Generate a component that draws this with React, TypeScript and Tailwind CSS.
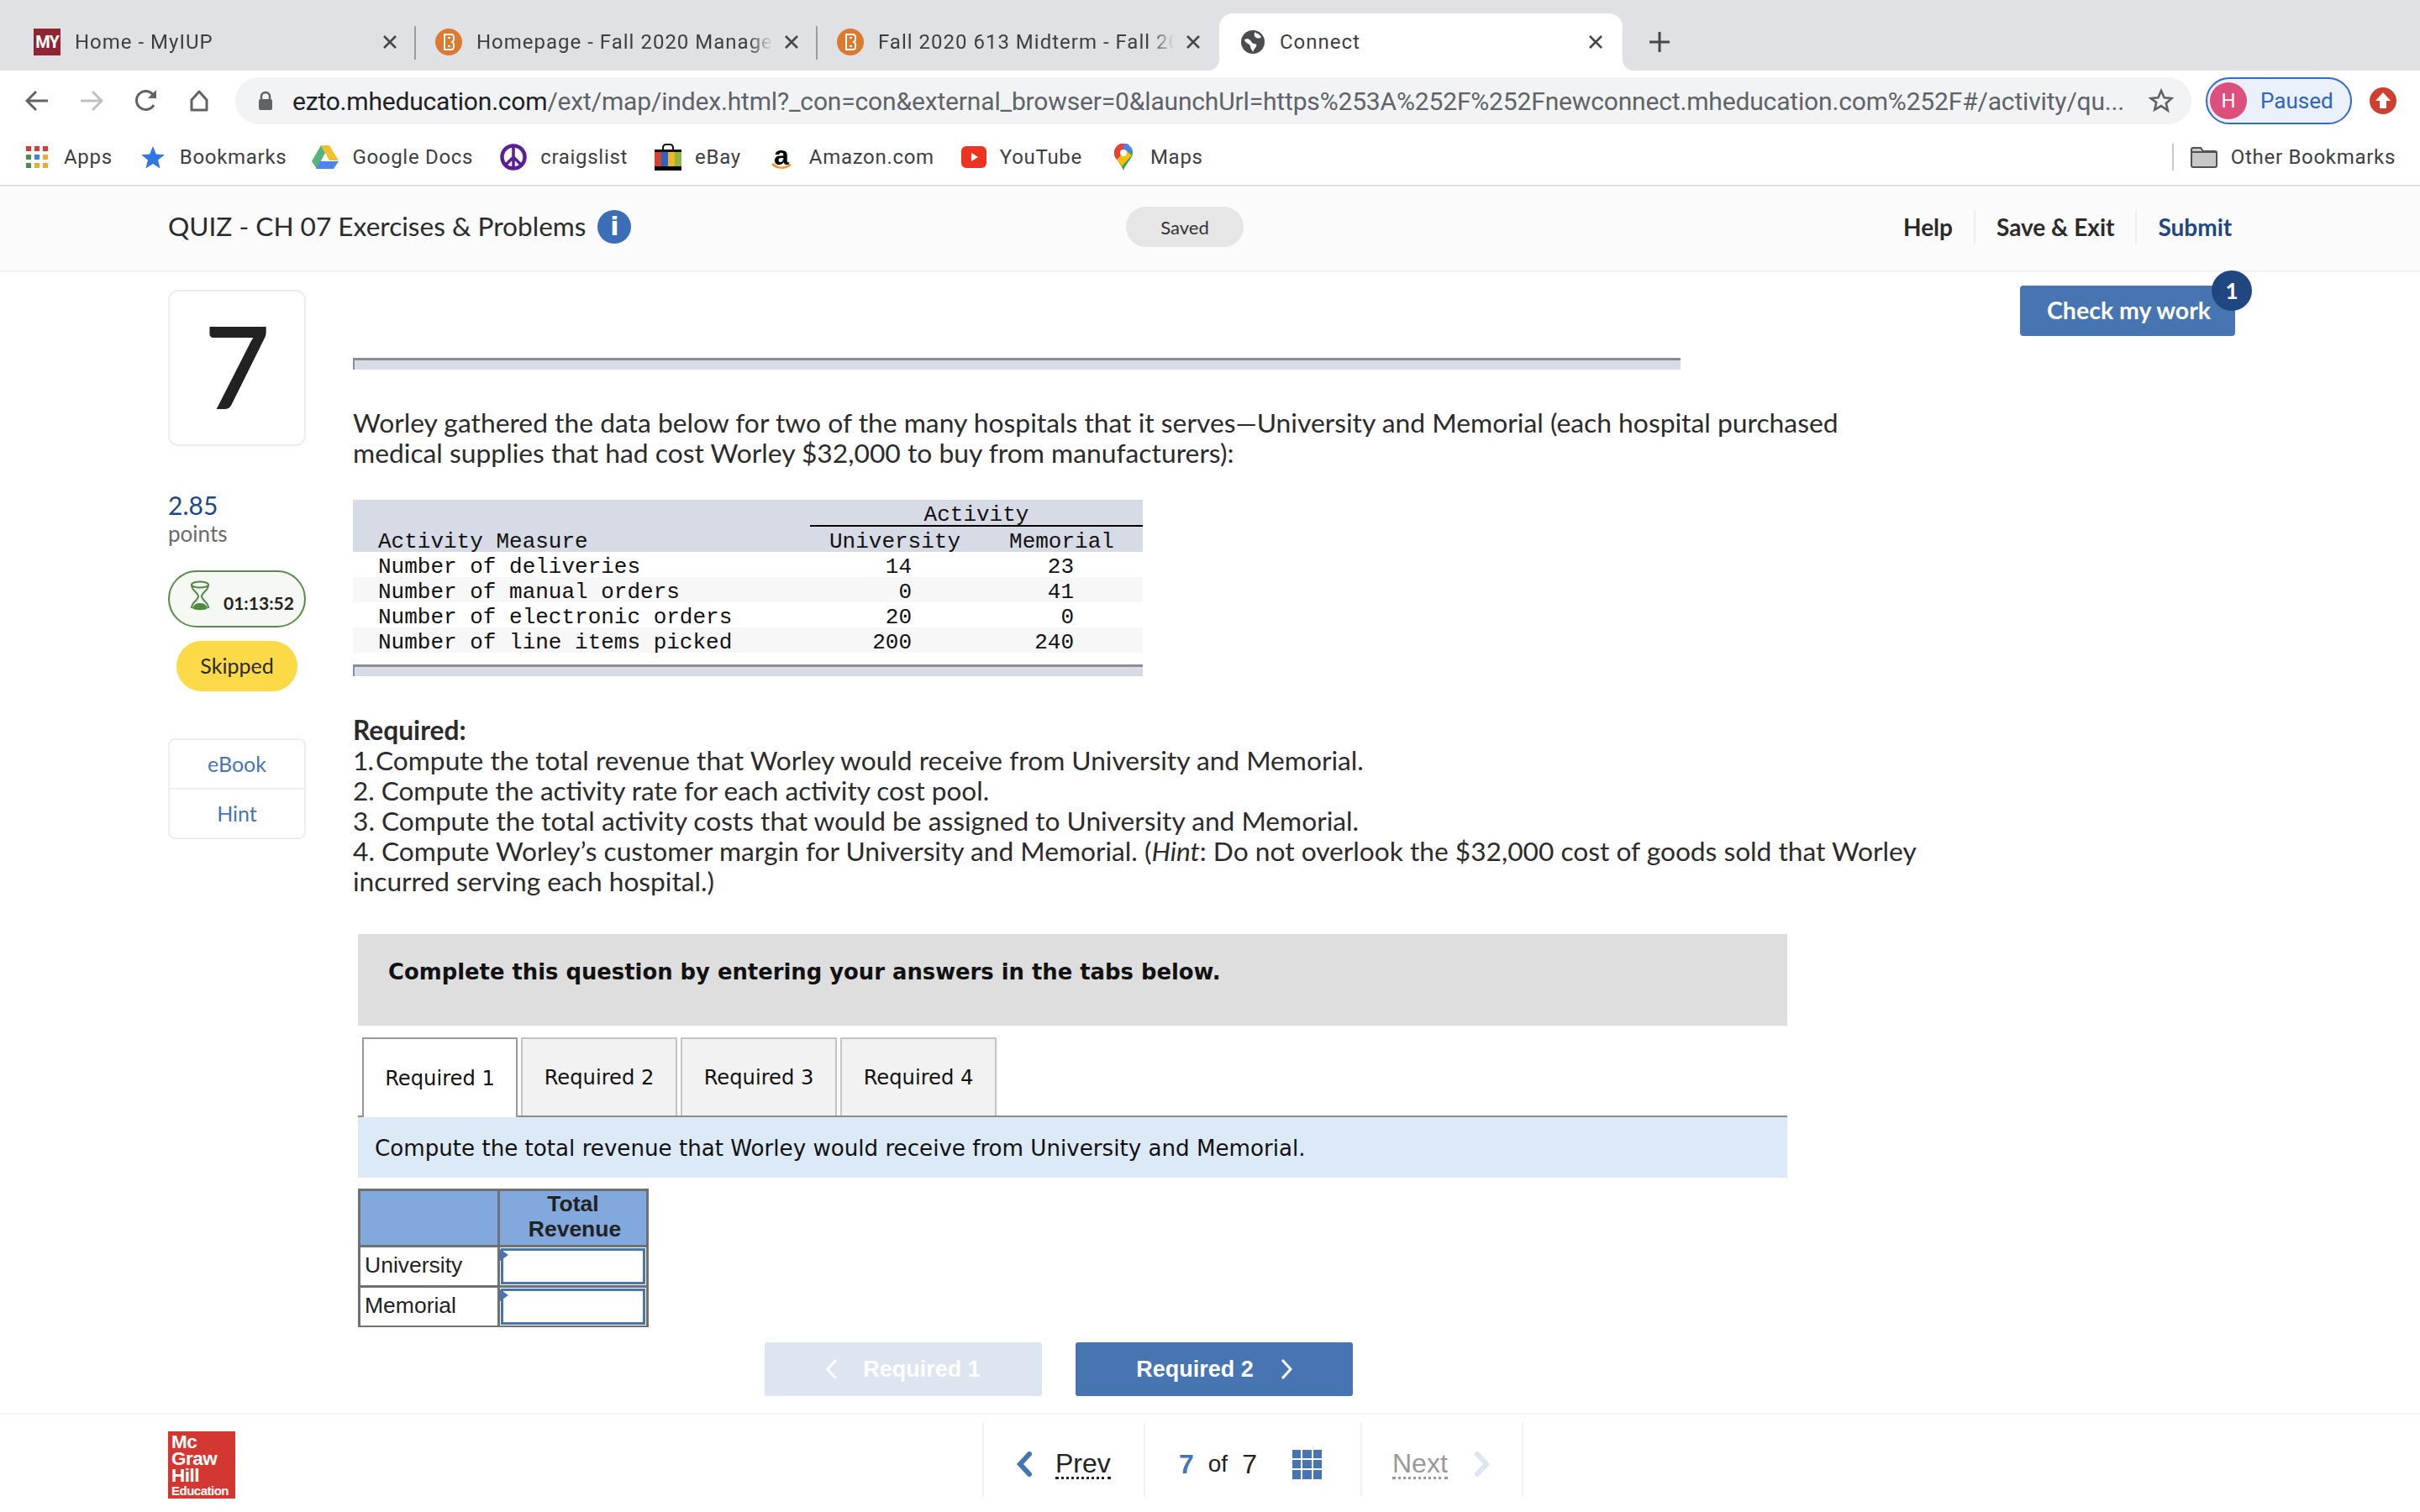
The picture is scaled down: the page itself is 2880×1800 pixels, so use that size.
import React from "react";

const chromeFont = "font-['Roboto',sans-serif]";
const bodyFont = "font-['Lato',sans-serif]";
const arial = "font-['Liberation_Sans',Arial,sans-serif]";
const verdana = "font-['DejaVu_Sans',sans-serif]";
const mono = "font-['Liberation_Mono',monospace]";

const BlackboardIcon = () => (
  <svg width="32" height="32" viewBox="0 0 32 32" className="shrink-0">
    <circle cx="16" cy="16" r="16" fill="#dd7a2f" />
    <path d="M11 7h9l2 2v5l-2 2 2 2v5l-2 2h-9z" fill="none" stroke="#fff" strokeWidth="2" />
    <path d="M15 11h3M15 21h3" stroke="#fff" strokeWidth="2" />
  </svg>
);

const GlobeIcon = () => (
  <svg width="28" height="28" viewBox="0 0 28 28" className="shrink-0">
    <circle cx="14" cy="14" r="14" fill="#4a4c50" />
    <path d="M4 11c3-1 5-1 7 1s2 4 5 4 3 3 0 6l-2 4c-1-3-3-4-3-7S5 16 4 11z" fill="#fff" />
    <path d="M16 2c2 2 6 2 8 6-2 2-5 2-7 0s-1-3-1-6z" fill="#fff" />
  </svg>
);

const CloseX = () => (
  <svg width="18" height="16" viewBox="0 0 18 16" className="shrink-0">
    <path d="M2 1l14 14M16 1L2 15" stroke="#45474b" strokeWidth="2.6" />
  </svg>
);

type TabProps = {
  icon: React.ReactNode;
  label: string;
  separator?: boolean;
};

const Tab: React.FC<TabProps> = ({ icon, label, separator }) => (
  <div className="relative flex h-[68px] w-[478px] items-center pl-[23px] pr-[22px]">
    {icon}
    <div className="ml-[17px] w-[356px] overflow-hidden whitespace-nowrap text-[24px] tracking-[1px] text-[#3c4043] [mask-image:linear-gradient(to_right,black_91%,transparent_99%)]">
      {label}
    </div>
    <div className="ml-auto">
      <CloseX />
    </div>
    {separator && <div className="absolute right-0 top-[15px] h-[40px] w-[2px] bg-[#9a9ca0]" />}
  </div>
);

const TabStrip = () => (
  <div className={`flex h-[84px] items-end bg-[#dfe1e5] pl-[17px] ${chromeFont}`}>
    <Tab
      separator
      label="Home - MyIUP"
      icon={
        <div className="flex h-[32px] w-[32px] shrink-0 items-center justify-center bg-[#8f2533] text-[20px] font-bold tracking-[-1px] text-white">
          MY
        </div>
      }
    />
    <Tab separator icon={<BlackboardIcon />} label="Homepage - Fall 2020 Manager" />
    <Tab icon={<BlackboardIcon />} label="Fall 2020 613 Midterm - Fall 2020" />
    <div className="relative flex h-[68px] w-[480px] items-center rounded-t-[16px] bg-white pl-[26px] pr-[23px]">
      <div className="absolute bottom-0 left-[-14px] h-[14px] w-[14px] bg-[radial-gradient(circle_at_0_0,#dfe1e5_14px,#ffffff_14.5px)]" />
      <div className="absolute bottom-0 right-[-14px] h-[14px] w-[14px] bg-[radial-gradient(circle_at_100%_0,#dfe1e5_14px,#ffffff_14.5px)]" />
      <GlobeIcon />
      <span className="ml-[18px] text-[24px] tracking-[1px] text-[#3c4043]">Connect</span>
      <div className="ml-auto">
        <CloseX />
      </div>
    </div>
    <svg width="26" height="26" viewBox="0 0 26 26" className="mb-[21px] ml-[31px]">
      <path d="M13 1v24M1 13h24" stroke="#45474b" strokeWidth="3" />
    </svg>
  </div>
);

const NavBar = () => (
  <div className={`flex h-[64px] items-start bg-white pl-[30px] pt-[8px] ${chromeFont}`}>
    <div className="flex h-[56px] w-[250px] items-center">
      <svg width="28" height="26" viewBox="0 0 28 26">
        <path d="M27 13H3M13 2L2 13l11 11" fill="none" stroke="#5f6368" strokeWidth="3" />
      </svg>
      <svg width="28" height="26" viewBox="0 0 28 26" className="ml-[37px]">
        <path d="M1 13h24M15 2l11 11-11 11" fill="none" stroke="#bdc1c6" strokeWidth="3" />
      </svg>
      <svg width="28" height="28" viewBox="0 0 28 28" className="ml-[37px]">
        <path d="M23 19a11 11 0 1 1 0-11" fill="none" stroke="#5f6368" strokeWidth="3" />
        <path d="M26 1v10H16z" fill="#5f6368" />
      </svg>
      <svg width="28" height="28" viewBox="0 0 28 28" className="ml-[35px]">
        <path d="M14 3L5 13v12h18V13z" fill="none" stroke="#5f6368" strokeWidth="3" strokeLinejoin="round" />
      </svg>
    </div>
    <div className="flex h-[56px] w-[2328px] items-center rounded-[28px] bg-[#f1f3f4] pl-[27px]">
      <svg width="18" height="24" viewBox="0 0 18 24" className="shrink-0">
        <path d="M4 10V7a5 5 0 0 1 10 0v3" fill="none" stroke="#5f6368" strokeWidth="2.5" />
        <rect x="1" y="10" width="16" height="13" rx="2" fill="#5f6368" />
      </svg>
      <div className="ml-[23px] w-[2190px] whitespace-nowrap text-[30px] tracking-[-0.16px] text-[#5f6368]">
        <span className="tracking-[-0.2px] text-[#202124]">ezto.mheducation.com</span>
        /ext/map/index.html?_con=con&external_browser=0&launchUrl=https%253A%252F%252Fnewconnect.mheducation.com%252F#/activity/qu...
      </div>
      <svg width="30" height="30" viewBox="0 0 30 30" className="ml-auto mr-[21px] shrink-0">
        <path d="M15 3l3.6 8.2 8.9.8-6.7 5.9 2 8.7L15 21.100l-7.800 4.500 2-8.700L2.500 12l8.900-.8z" fill="none" stroke="#5f6368" strokeWidth="2.600" />
      </svg>
    </div>
    <div className="ml-[17px] flex h-[56px] w-[174px] items-center rounded-[28px] border-2 border-[#2f6bd0] bg-[#ebf1fb] pl-[3px]">
      <div className="flex h-[44px] w-[44px] items-center justify-center rounded-full bg-[#dd4f7c] text-[24px] text-white">
        H
      </div>
      <span className="ml-[16px] text-[26px] text-[#2f63c4]">Paused</span>
    </div>
    <svg width="32" height="32" viewBox="0 0 32 32" className="ml-[21px] mt-[12px]">
      <circle cx="16" cy="16" r="16" fill="#cf3f2f" />
      <path d="M16 6l9 10h-5v9h-8v-9H7z" fill="#fff" />
    </svg>
  </div>
);

const bookmarks: { key: string; label: string; wrap: string; icon: React.ReactNode }[] = [
  {
    key: "apps",
    label: "Apps",
    wrap: "ml-[31px] mr-[19px] w-[26px]",
    icon: (
      <svg width="26" height="26" viewBox="0 0 26 26">
        <g>
          <rect x="0" y="0" width="6" height="6" fill="#e0392f" />
          <rect x="10" y="0" width="6" height="6" fill="#e0392f" />
          <rect x="20" y="0" width="6" height="6" fill="#e0392f" />
          <rect x="0" y="10" width="6" height="6" fill="#4c8c4a" />
          <rect x="10" y="10" width="6" height="6" fill="#3f7de8" />
          <rect x="20" y="10" width="6" height="6" fill="#f2a72e" />
          <rect x="0" y="20" width="6" height="6" fill="#4c8c4a" />
          <rect x="10" y="20" width="6" height="6" fill="#f2a72e" />
          <rect x="20" y="20" width="6" height="6" fill="#f2a72e" />
        </g>
      </svg>
    ),
  },
  {
    key: "bookmarks",
    label: "Bookmarks",
    wrap: "ml-[34px] mr-[18px] w-[28px]",
    icon: (
      <svg width="28" height="28" viewBox="0 0 28 28">
        <path d="M14 1l3.800 9.500 10 .7-7.700 6.400 2.500 9.800L14 22.100l-8.600 5.300 2.500-9.800L.2 11.200l10-.7z" fill="#3275e4" />
      </svg>
    ),
  },
  {
    key: "docs",
    label: "Google Docs",
    wrap: "ml-[30px] mr-[16px] w-[32px]",
    icon: (
      <svg width="32" height="30" viewBox="0 0 32 30">
        <path d="M11 1h10l11 18H21z" fill="#f6c02d" />
        <path d="M11 1l5 9-10 19-6-9z" fill="#58b27c" />
        <path d="M10 20h22l-6 9H5z" fill="#4d86f0" />
      </svg>
    ),
  },
  {
    key: "craigslist",
    label: "craigslist",
    wrap: "ml-[32px] mr-[16px] w-[32px]",
    icon: (
      <svg width="32" height="32" viewBox="0 0 32 32">
        <circle cx="16" cy="16" r="13.500" fill="none" stroke="#5a1f96" strokeWidth="4.500" />
        <path d="M16 2v28M16 16L6 26M16 16l10 10" stroke="#5a1f96" strokeWidth="3.500" />
      </svg>
    ),
  },
  {
    key: "ebay",
    label: "eBay",
    wrap: "ml-[32px] mr-[16px] w-[32px]",
    icon: (
      <svg width="32" height="32" viewBox="0 0 32 32">
        <path d="M10 8V4a4 4 0 0 1 4-3h4a4 4 0 0 1 4 3v4" fill="none" stroke="#111" strokeWidth="2" />
        <rect x="0" y="7" width="32" height="3" fill="#111" />
        <rect x="0" y="10" width="8" height="17" fill="#d8402f" />
        <rect x="8" y="10" width="8" height="17" fill="#2f62c5" />
        <rect x="16" y="10" width="8" height="17" fill="#f0b62a" />
        <rect x="24" y="10" width="8" height="17" fill="#8cb83e" />
        <rect x="0" y="27" width="32" height="5" fill="#000" />
      </svg>
    ),
  },
  {
    key: "amazon",
    label: "Amazon.com",
    wrap: "ml-[36px] mr-[20px] w-[25px]",
    icon: (
      <div className="relative h-[32px] w-[25px]">
        <div className={`text-center text-[32px] font-bold leading-[28px] text-black ${arial}`}>a</div>
        <svg width="25" height="10" viewBox="0 0 25 10" className="absolute bottom-0 left-0">
          <path d="M1 2c6 6 15 6 22 1" fill="none" stroke="#f09a20" strokeWidth="2.500" />
        </svg>
      </div>
    ),
  },
  {
    key: "youtube",
    label: "YouTube",
    wrap: "ml-[32px] mr-[16px] w-[30px]",
    icon: (
      <svg width="30" height="28" viewBox="0 0 30 28">
        <rect x="0" y="1" width="30" height="26" rx="6" fill="#ef3323" />
        <path d="M12 9l8 5-8 5z" fill="#fff" />
      </svg>
    ),
  },
  {
    key: "maps",
    label: "Maps",
    wrap: "ml-[38px] mr-[21px] w-[22px]",
    icon: (
      <svg width="22" height="32" viewBox="0 0 22 32">
        <path d="M11 0a11 11 0 0 1 11 11c0 7-8 12-11 21C8 23 0 18 0 11A11 11 0 0 1 11 0z" fill="#34a853" />
        <path d="M3 3a11 11 0 0 1 15-1L3 19c-2-2-3-5-3-8 0-3 1-6 3-8z" fill="#ea4335" />
        <path d="M11 0a11 11 0 0 1 11 11l-11-2z" fill="#4285f4" />
        <path d="M3 19L14 8l7 6-12 13c-1-3-4-6-6-8z" fill="#fbbc04" />
        <circle cx="11" cy="11" r="4" fill="#fff" />
      </svg>
    ),
  },
];

const BookmarkBar = () => (
  <div className={`flex h-[74px] items-center border-b-2 border-[#dedfe4] bg-white pt-[5px] text-[24px] tracking-[0.7px] text-[#3c4043] ${chromeFont}`}>
    {bookmarks.map((b) => (
      <React.Fragment key={b.key}>
        <div className={`flex shrink-0 items-center justify-center ${b.wrap}`}>{b.icon}</div>
        <span>{b.label}</span>
      </React.Fragment>
    ))}
    <div className="ml-auto mr-[20px] w-[2px] h-[32px] bg-[#c8c9cc]" />
    <svg width="32" height="26" viewBox="0 0 32 26" className="mr-[16px]">
      <path d="M1 4a2 2 0 0 1 2-2h9l3 4h14a2 2 0 0 1 2 2v15a2 2 0 0 1-2 2H3a2 2 0 0 1-2-2z" fill="#c8c8c8" stroke="#4f5155" strokeWidth="2" />
      <path d="M1 7h30" stroke="#4f5155" strokeWidth="2" />
    </svg>
    <span className="mr-[29px]">Other Bookmarks</span>
  </div>
);

const QuizHeader = () => (
  <div className={`flex h-[102px] items-center border-b-2 border-[#f2f2f2] bg-[#fbfbfb] pb-[4px] pl-[200px] ${bodyFont}`}>
    <div className="w-[1140px] flex items-center text-[31.6px] text-[#2b2b2b]">
      <span>QUIZ - CH 07 Exercises &amp; Problems</span>
      <div className={`ml-[14px] flex h-[40px] w-[40px] items-center justify-center rounded-full bg-[#3a6fb7] text-[30px] font-bold text-white ${verdana}`}>
        i
      </div>
    </div>
    <div className="flex h-[48px] w-[140px] items-center justify-center rounded-[24px] bg-[#e6e6e6] text-[22px] text-[#333]">
      Saved
    </div>
    <div className="ml-[785px] flex items-center text-[28px] font-bold text-[#2b2b2b]">
      <span>Help</span>
      <div className="mx-[25px] h-[40px] w-[2px] bg-[#eeeeee]" />
      <span>Save &amp; Exit</span>
      <div className="mx-[25px] h-[40px] w-[2px] bg-[#eeeeee]" />
      <span className="text-[#214780]">Submit</span>
    </div>
  </div>
);

const Hourglass = () => (
  <svg width="24" height="38" viewBox="0 0 24 38" className="shrink-0">
    <ellipse cx="12" cy="5" rx="10" ry="3.500" fill="none" stroke="#4f8a42" strokeWidth="2" />
    <path d="M2 5c0 8 8 9 8 14S2 25 2 33M22 5c0 8-8 9-8 14s8 6 8 14" fill="none" stroke="#4f8a42" strokeWidth="2" />
    <path d="M3 33c2-5 5-6 9-6s7 1 9 6c-2 3-16 3-18 0z" fill="#4f8a42" />
  </svg>
);

const LeftRail = () => (
  <div className={`ml-[200px] flex w-[164px] shrink-0 flex-col pt-[21px] ${bodyFont}`}>
    <div className="flex h-[186px] items-center justify-center rounded-[12px] border-2 border-[#eeeeee] pb-[6px] text-[134px] leading-none text-[#222] [-webkit-text-stroke:2px_#222]">
      7
    </div>
    <div className="mt-[52px] text-[30px] leading-[36px] text-[#214780]">2.85</div>
    <div className="text-[26px] leading-[32px] text-[#6b6b6b]">points</div>
    <div className="mt-[28px] flex h-[68px] items-center rounded-[34px] border-2 border-[#5b8a4a] bg-[#f5f8f3] pl-[24px] pb-[6px]">
      <Hourglass />
      <span className="ml-[16px] mt-[16px] text-[21px] font-bold text-[#222]">01:13:52</span>
    </div>
    <div className="mx-[10px] mt-[16px] flex h-[60px] items-center justify-center rounded-[30px] bg-[#fbd947] text-[25px] text-[#2b2b2b]">
      Skipped
    </div>
    <div className="mt-[56px] flex h-[120px] flex-col rounded-[8px] border-2 border-[#eeeeee] text-[25px] text-[#4675b2]">
      <div className="flex h-[59px] items-center justify-center border-b-2 border-[#eeeeee]">eBook</div>
      <div className="flex flex-1 items-center justify-center">Hint</div>
    </div>
  </div>
);

const GrayBar = ({ width }: { width: string }) => (
  <div className={`h-[14px] border-l-2 border-t-[3px] border-[#8a8d93] bg-[#d7dbe5] ${width}`} />
);

const activityRows = [
  { name: "Number of deliveries", university: "14", memorial: "23" },
  { name: "Number of manual orders", university: "0", memorial: "41" },
  { name: "Number of electronic orders", university: "20", memorial: "0" },
  { name: "Number of line items picked", university: "200", memorial: "240" },
];

const ActivityTable = () => (
  <div className={`w-[940px] text-[26px] text-[#111] ${mono}`}>
    <div className="h-[62px] bg-[#d7dbe5]">
      <div className="ml-[544px] h-[32px] border-b-2 border-black text-center leading-[37px]">Activity</div>
      <div className="flex h-[30px] leading-[36px]">
        <div className="w-[544px] pl-[30px]">Activity Measure</div>
        <div className="ml-[23px]">University</div>
        <div className="ml-[58px]">Memorial</div>
      </div>
    </div>
    {activityRows.map((row, i) => (
      <div key={row.name} className={`flex h-[30px] leading-[36px] ${i % 2 === 1 ? "bg-[#f7f7f7]" : "bg-white"}`}>
        <div className="w-[544px] pl-[30px]">{row.name}</div>
        <div className="w-[121px] text-right">{row.university}</div>
        <div className="w-[193px] text-right">{row.memorial}</div>
      </div>
    ))}
  </div>
);

const tabs = ["Required 1", "Required 2", "Required 3", "Required 4"];

const AnswerRow = ({ label }: { label: string }) => (
  <div className="flex h-[48px] border-t-[3px] border-[#707070]">
    <div className="flex w-[163px] items-center pb-[4px] pl-[5px]">{label}</div>
    <div className="relative flex-1 border-l-[3px] border-[#707070] p-[1px]">
      <div className="h-full border-[3px] border-[#4675b2] bg-white" />
      <div className="absolute left-0 top-[2px] h-0 w-0 border-y-[7px] border-l-[10px] border-y-transparent border-l-[#4675b2]" />
    </div>
  </div>
);

const AnswerArea = () => (
  <div className="ml-[6px] mt-[45px] w-[1701px]">
    <div className={`h-[109px] bg-[#dedede] pl-[36px] pt-[29px] text-[25.85px] font-bold leading-[32px] text-[#111] ${verdana}`}>
      Complete this question by entering your answers in the tabs below.
    </div>
    <div className={`mt-[14px] flex h-[95px] gap-[4px] border-b-2 border-[#8c8c8c] pl-[5px] text-[24.2px] text-[#111] ${verdana}`}>
      {tabs.map((t, i) => (
        <div
          key={t}
          className={
            i === 0
              ? "mb-[-2px] flex h-[95px] w-[185px] items-center justify-center border-2 border-b-0 border-[#999999] bg-white"
              : "flex h-[93px] w-[186px] items-center justify-center border-2 border-b-0 border-[#c4c4c4] bg-[#f2f2f2]"
          }
        >
          {t}
        </div>
      ))}
    </div>
    <div className={`flex h-[72px] items-center bg-[#dce9f7] pl-[20px] pt-[1px] text-[26.13px] text-[#111] ${verdana}`}>
      Compute the total revenue that Worley would receive from University and Memorial.
    </div>
    <div className={`mt-[13px] w-[346px] border-x-[3px] border-t-[3px] border-b-[2px] border-[#707070] text-[26.5px] text-[#222] ${arial}`}>
      <div className="flex h-[64px] bg-[#81a9dd] font-bold leading-[30px]">
        <div className="w-[163px]" />
        <div className="flex-1 border-l-[3px] border-[#707070] text-center">
          Total
          <br />
          <span className="ml-[4px]">Revenue</span>
        </div>
      </div>
      <AnswerRow label="University" />
      <AnswerRow label="Memorial" />
    </div>
    <div className={`ml-[484px] mt-[18px] flex gap-[40px] text-[27px] font-bold text-white ${arial}`}>
      <div className="flex h-[64px] w-[330px] items-center justify-center gap-[30px] rounded-[3px] bg-[#dce5f0]">
        <svg width="14" height="26" viewBox="0 0 14 26">
          <path d="M12 2L2 13l10 11" fill="none" stroke="#fff" strokeWidth="3" />
        </svg>
        <span>Required 1</span>
      </div>
      <div className="flex h-[64px] w-[330px] items-center justify-center gap-[32px] rounded-[3px] bg-[#4675b2]">
        <span>Required 2</span>
        <svg width="14" height="26" viewBox="0 0 14 26">
          <path d="M2 2l10 11L2 24" fill="none" stroke="#fff" strokeWidth="3" />
        </svg>
      </div>
    </div>
  </div>
);

const MainColumn = () => (
  <div className={`ml-[56px] w-[1900px] pt-[102px] text-[31.7px] leading-[36px] text-[#2b2b2b] ${bodyFont}`}>
    <GrayBar width="w-[1580px]" />
    <p className="mt-[45px] w-[1865px] text-[31.8px]">
      Worley gathered the data below for two of the many hospitals that it serves—University and Memorial (each hospital purchased medical supplies that had cost Worley $32,000 to buy from manufacturers):
    </p>
    <div className="mt-[38px]">
      <ActivityTable />
    </div>
    <div className="mt-[14px]">
      <GrayBar width="w-[940px]" />
    </div>
    <div className="mt-[46px] font-bold">Required:</div>
    <div>
      <span className="tracking-[-1px]">1</span>
      <span className="tracking-[-6px]">.</span> Compute the total revenue that Worley would receive from University and Memorial.
    </div>
    <div className="text-[31.5px]">2. Compute the activity rate for each activity cost pool.</div>
    <div>3. Compute the total activity costs that would be assigned to University and Memorial.</div>
    <div className="whitespace-nowrap">
      4. Compute Worley’s customer margin for University and Memorial. (<i>Hint</i>: Do not overlook the $32,000 cost of goods sold that Worley
    </div>
    <div>incurred serving each hospital.)</div>
    <AnswerArea />
  </div>
);

const CheckButton = () => (
  <div className={`relative ml-[84px] mt-[16px] flex h-[60px] w-[256px] shrink-0 items-center rounded-[4px] bg-[#4675b2] pb-[2px] pl-[32px] text-[28.5px] font-bold text-white ${bodyFont}`}>
    Check my work
    <div className="absolute right-[-20px] top-[-18px] flex h-[48px] w-[48px] items-center justify-center rounded-full bg-[#214780] text-[26px]">
      1
    </div>
  </div>
);

const Footer = () => (
  <div className={`flex h-[116px] border-t-2 border-[#f2f2f2] pl-[200px] ${arial}`}>
    <div className="mt-[20px] h-[80px] w-[80px] bg-[#d43731] pl-[4px] pt-[3px] text-[22.5px] font-bold leading-[20px] tracking-[-0.5px] text-white">
      Mc
      <br />
      Graw
      <br />
      Hill
      <div className="text-[15px] leading-[16px]">Education</div>
    </div>
    <div className="ml-[889px] mt-[10px] flex h-[88px] border-x-2 border-[#f2f2f2] text-[32px] text-[#222]">
      <div className="flex w-[190px] items-center pl-[38px] pt-[10px]">
        <svg width="20" height="30" viewBox="0 0 20 30">
          <path d="M16 3L5 15l11 12" fill="none" stroke="#4675b2" strokeWidth="6" strokeLinecap="round" />
        </svg>
        <span className="ml-[27px] border-b-[3px] border-dotted border-[#222] leading-[32px]">Prev</span>
      </div>
      <div className="flex w-[260px] items-center border-x-2 border-[#f2f2f2] pl-[40px] pt-[10px]">
        <span className="font-bold text-[#4675b2]">7</span>
        <span className="ml-[17px] text-[28px]">of</span>
        <span className="ml-[17px]">7</span>
        <div className="ml-[42px] grid h-[35px] w-[35px] grid-cols-3 gap-[2px]">
          {Array.from({ length: 9 }).map((_, i) => (
            <div key={i} className="bg-[#4675b2]" />
          ))}
        </div>
      </div>
      <div className="flex w-[190px] items-center pl-[36px] pt-[10px] text-[#999999]">
        <span className="border-b-[3px] border-dotted border-[#999999] leading-[32px]">Next</span>
        <svg width="20" height="30" viewBox="0 0 20 30" className="ml-[31px]">
          <path d="M4 3l11 12L4 27" fill="none" stroke="#dce5f0" strokeWidth="6" strokeLinecap="round" />
        </svg>
      </div>
    </div>
  </div>
);

export default function App() {
  return (
    <div className="h-[1800px] w-[2880px] overflow-hidden bg-white">
      <TabStrip />
      <NavBar />
      <BookmarkBar />
      <QuizHeader />
      <div className="flex h-[1358px]">
        <LeftRail />
        <MainColumn />
        <CheckButton />
      </div>
      <Footer />
    </div>
  );
}
